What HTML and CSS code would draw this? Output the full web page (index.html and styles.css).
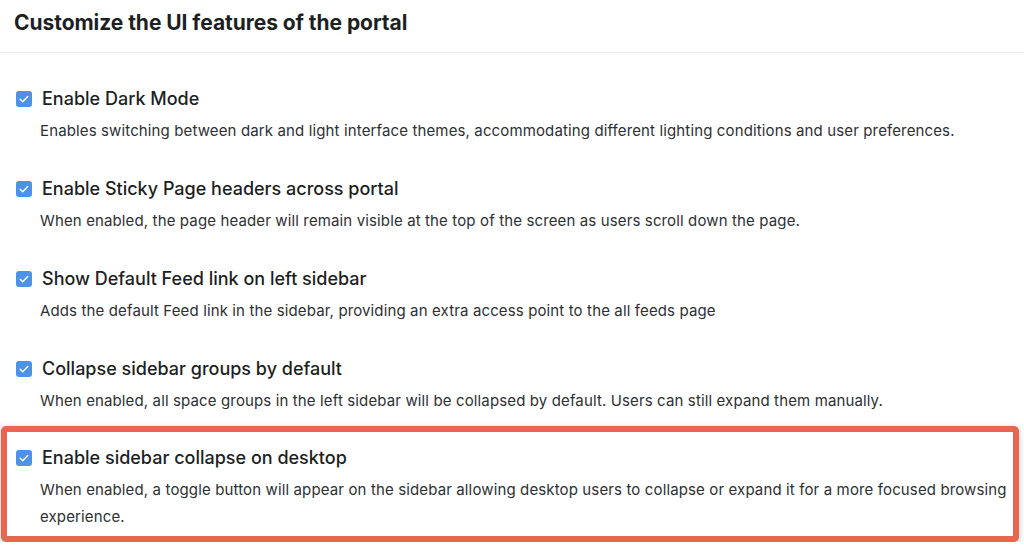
FILE: index.html
```html
<!DOCTYPE html>
<html lang="en">
<head>
  <meta charset="UTF-8">
  <meta name="viewport" content="width=device-width, initial-scale=1.0">
  <title>Portal UI settings</title>
  <link rel="stylesheet" href="styles.css">
</head>
<body>
  <div class="page-header">
    <h1>Customize the UI features of the portal</h1>
  </div>
  <div class="settings">
    <div class="setting">
      <label class="setting-title">
        <span class="checkbox"><svg viewBox="0 0 16 16" width="16" height="16"><path d="M4.2 8.3l2.5 2.4 5-5.2" fill="none" stroke="#fff" stroke-width="1.5" stroke-linecap="round" stroke-linejoin="round"/></svg></span>
        Enable Dark Mode
      </label>
      <p class="setting-desc">Enables switching between dark and light interface themes, accommodating different lighting conditions and user preferences.</p>
    </div>
    <div class="setting">
      <label class="setting-title">
        <span class="checkbox"><svg viewBox="0 0 16 16" width="16" height="16"><path d="M4.2 8.3l2.5 2.4 5-5.2" fill="none" stroke="#fff" stroke-width="1.5" stroke-linecap="round" stroke-linejoin="round"/></svg></span>
        Enable Sticky Page headers across portal
      </label>
      <p class="setting-desc">When enabled, the page header will remain visible at the top of the screen as users scroll down the page.</p>
    </div>
    <div class="setting">
      <label class="setting-title">
        <span class="checkbox"><svg viewBox="0 0 16 16" width="16" height="16"><path d="M4.2 8.3l2.5 2.4 5-5.2" fill="none" stroke="#fff" stroke-width="1.5" stroke-linecap="round" stroke-linejoin="round"/></svg></span>
        Show Default Feed link on left sidebar
      </label>
      <p class="setting-desc">Adds the default Feed link in the sidebar, providing an extra access point to the all feeds page</p>
    </div>
    <div class="setting">
      <label class="setting-title">
        <span class="checkbox"><svg viewBox="0 0 16 16" width="16" height="16"><path d="M4.2 8.3l2.5 2.4 5-5.2" fill="none" stroke="#fff" stroke-width="1.5" stroke-linecap="round" stroke-linejoin="round"/></svg></span>
        Collapse sidebar groups by default
      </label>
      <p class="setting-desc">When enabled, all space groups in the left sidebar will be collapsed by default. Users can still expand them manually.</p>
    </div>
    <div class="setting highlight">
      <label class="setting-title">
        <span class="checkbox"><svg viewBox="0 0 16 16" width="16" height="16"><path d="M4.2 8.3l2.5 2.4 5-5.2" fill="none" stroke="#fff" stroke-width="1.5" stroke-linecap="round" stroke-linejoin="round"/></svg></span>
        Enable sidebar collapse on desktop
      </label>
      <p class="setting-desc">When enabled, a toggle button will appear on the sidebar allowing desktop users to collapse or expand it for a more focused browsing experience.</p>
    </div>
  </div>
</body>
</html>
```

FILE: styles.css
```css
body {
  margin: 0;
  font-family: Inter, "Noto Sans", sans-serif;
  background: #fff;
  color: #1d1f23;
  overflow: hidden;
}
.page-header {
  padding: 8px 14px 0;
  height: 44px;
  border-bottom: 1px solid #ececec;
}
.page-header h1 {
  margin: 0;
  font-size: 21px;
  line-height: 30px;
  font-weight: 700;
  letter-spacing: -0.05px;
}
.settings {
  padding: 34px 5px 0 16px;
}
.setting {
  margin-bottom: 33px;
}
.setting-title {
  display: flex;
  align-items: center;
  gap: 10px;
  font-size: 18px;
  line-height: 24px;
  font-weight: 500;
  color: #1d1f23;
}
.checkbox {
  width: 16px;
  height: 16px;
  border-radius: 3px;
  background: #4c92e6;
  display: flex;
}
.setting-desc {
  margin: 6px 0 0 24px;
  font-size: 15px;
  line-height: 27px;
  letter-spacing: 0.13px;
  color: #2e3033;
}
.highlight {
  margin: -21px 0 0 -15px;
  padding: 14px 0 6px 9px;
  border: 6px solid #e8654f;
  border-radius: 5px;
  box-shadow: 0 2px 6px rgba(0, 0, 0, 0.25);
}
```
